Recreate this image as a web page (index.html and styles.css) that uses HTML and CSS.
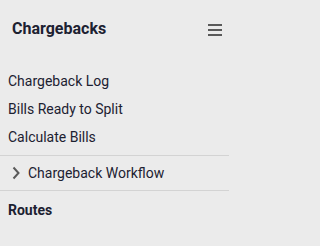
FILE: index.html
```html
<!DOCTYPE html>
<html>
<head>
<meta charset="utf-8">
<link rel="stylesheet" href="styles.css">
</head>
<body>
<div class="sidebar">
  <header class="header">
    <span class="title">Chargebacks</span>
    <svg class="menu-icon" width="14" height="14" viewBox="0 0 14 14">
      <rect x="0" y="1" width="14" height="2" fill="#5a5a5a"/>
      <rect x="0" y="6" width="14" height="2" fill="#5a5a5a"/>
      <rect x="0" y="11" width="14" height="2" fill="#5a5a5a"/>
    </svg>
  </header>
  <nav class="links">
    <a class="link">Chargeback Log</a>
    <a class="link">Bills Ready to Split</a>
    <a class="link">Calculate Bills</a>
  </nav>
  <div class="group">
    <svg class="chevron" width="8" height="14" viewBox="0 0 8 14">
      <polyline points="1.5,1.5 6.5,7 1.5,12.5" fill="none" stroke="#5a5a5a" stroke-width="2"/>
    </svg>
    <span class="group-label">Chargeback Workflow</span>
  </div>
  <div class="section">Routes</div>
</div>
</body>
</html>
```
FILE: styles.css
```css
html, body {
  margin: 0;
  padding: 0;
  background: #ebebeb;
}
body {
  font-family: Roboto, "Noto Sans", sans-serif;
  color: #1c2131;
  width: 229px;
  height: 246px;
  overflow: hidden;
}
.sidebar {
  display: flex;
  flex-direction: column;
}
.header {
  display: flex;
  align-items: flex-start;
  justify-content: space-between;
  padding: 19px 7px 0 12px;
  height: 48px;
}
.title {
  font-size: 16px;
  font-weight: 700;
  line-height: 20px;
}
.menu-icon {
  margin-top: 4px;
}
.links {
  display: flex;
  flex-direction: column;
  padding: 0 0 4px 8px;
}
.link {
  font-size: 14px;
  line-height: 28px;
}
.group {
  display: flex;
  align-items: center;
  height: 34px;
  border-top: 1px solid #d3d3d3;
  border-bottom: 1px solid #d3d3d3;
  padding-left: 12px;
}
.chevron {
  margin-right: 8px;
}
.group-label {
  font-size: 14px;
}
.section {
  font-size: 14px;
  font-weight: 700;
  line-height: 20px;
  padding: 9px 0 0 8px;
}
```
